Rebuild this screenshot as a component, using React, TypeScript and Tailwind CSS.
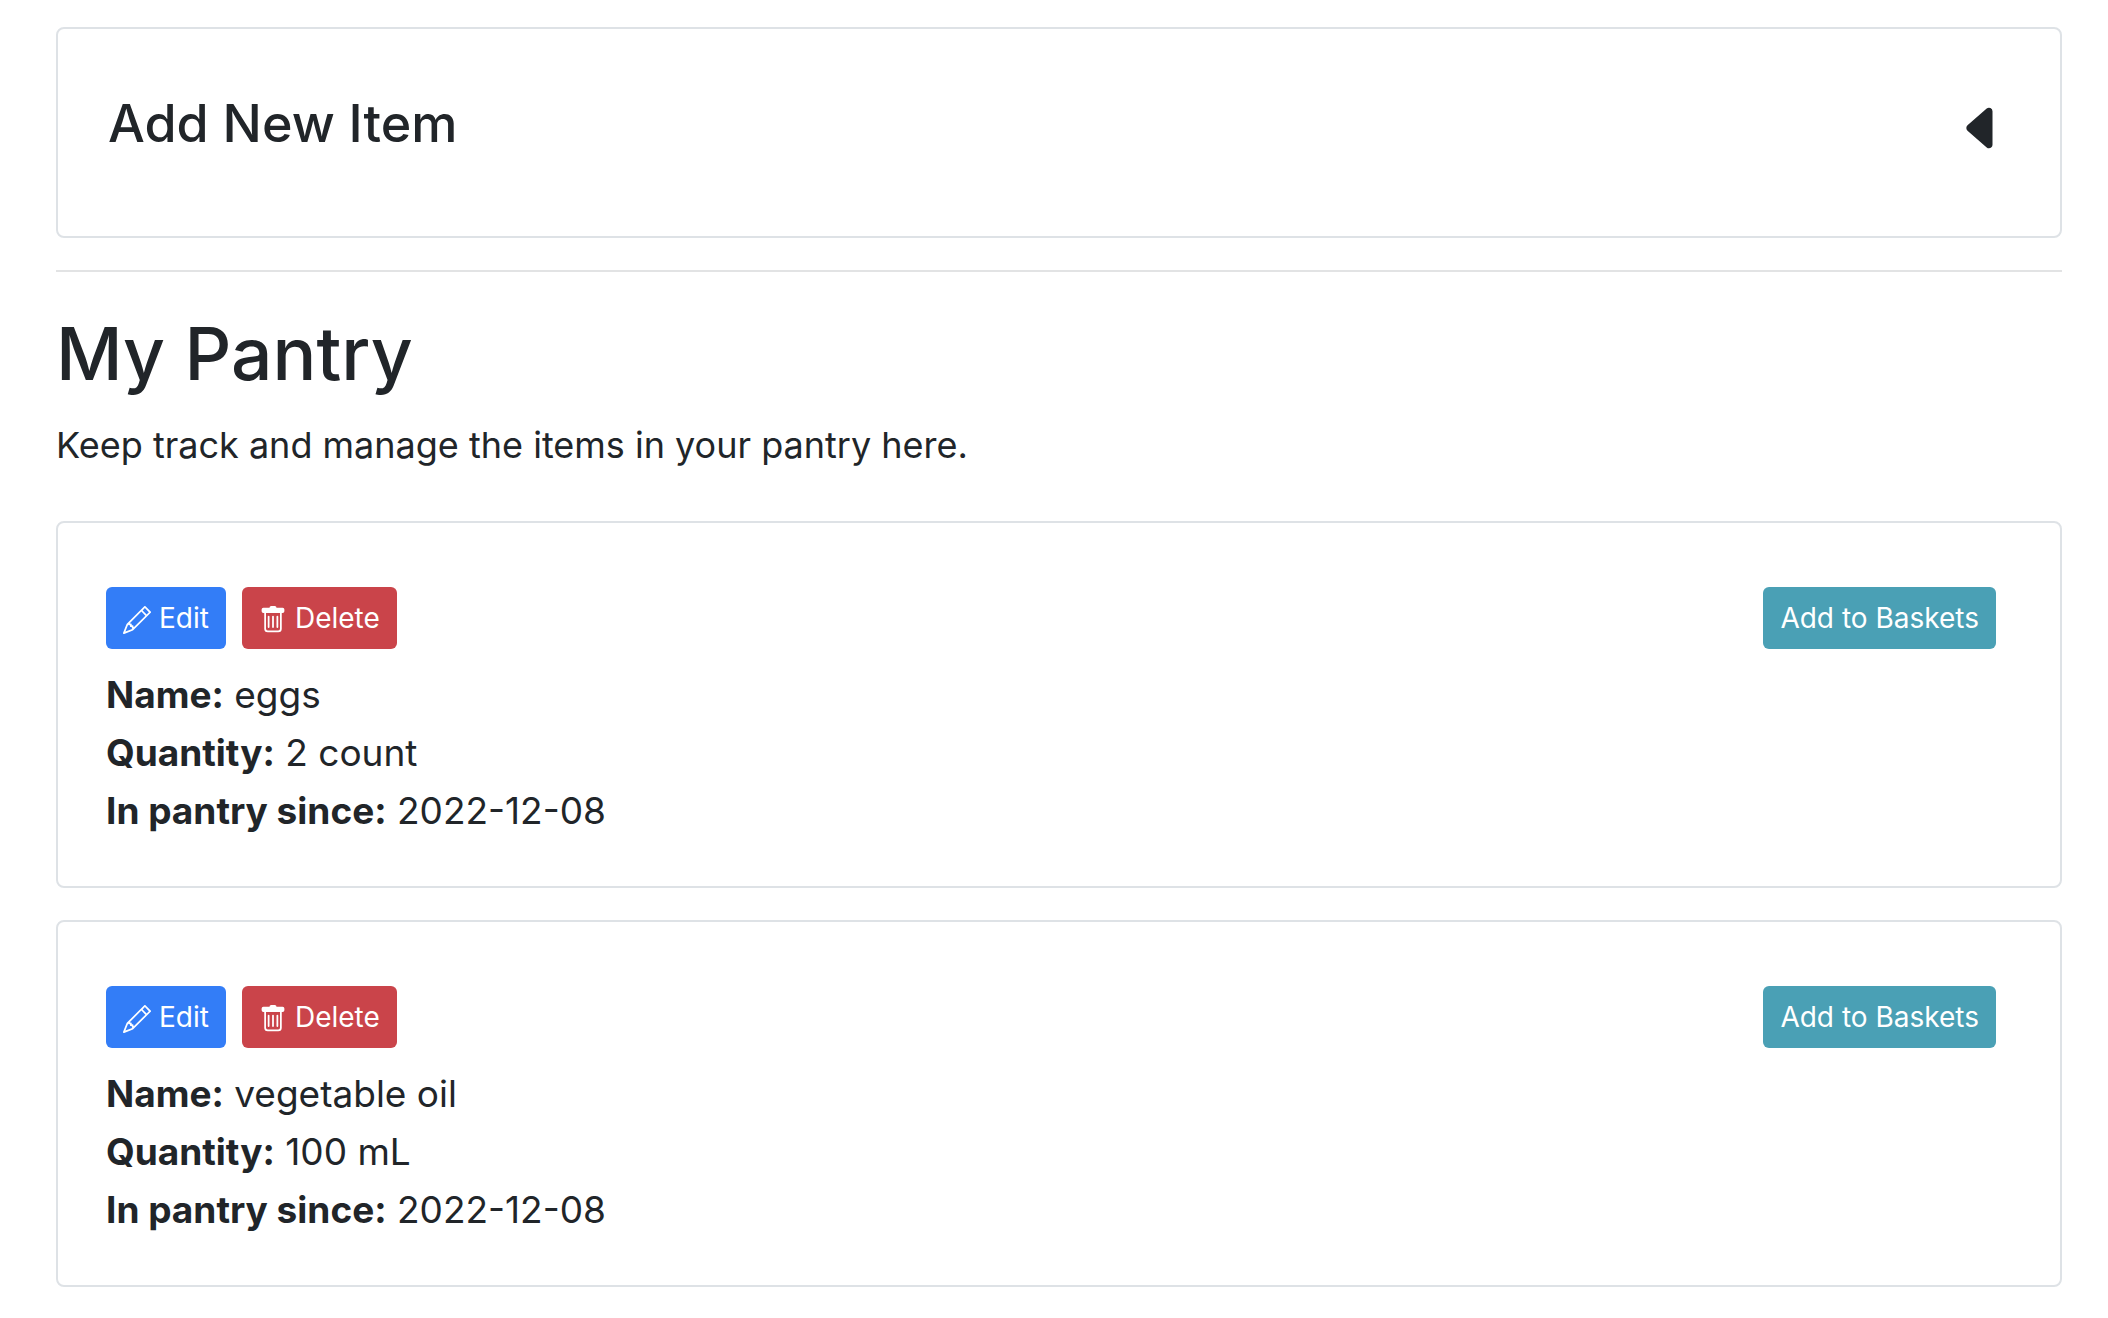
import { useState } from "react";
import { BsCaretLeftFill, BsPencil } from "react-icons/bs";

type PantryItem = { name: string; quantity: string; since: string };

const items: PantryItem[] = [
  { name: "eggs", quantity: "2 count", since: "2022-12-08" },
  { name: "vegetable oil", quantity: "100 mL", since: "2022-12-08" },
];

function TrashIcon({ className }: { className: string }) {
  return (
    <svg viewBox="0 0 16 16" fill="currentColor" aria-hidden="true" className={className}>
      <path d="M5.5 5.5A.5.5 0 0 1 6 6v6a.5.5 0 0 1-1 0V6a.5.5 0 0 1 .5-.5zm2.5 0a.5.5 0 0 1 .5.5v6a.5.5 0 0 1-1 0V6a.5.5 0 0 1 .5-.5zm3 .5a.5.5 0 0 0-1 0v6a.5.5 0 0 0 1 0V6z" />
      <path
        fillRule="evenodd"
        d="M14.5 3a1 1 0 0 1-1 1H13v9a2 2 0 0 1-2 2H5a2 2 0 0 1-2-2V4h-.5a1 1 0 0 1-1-1V2a1 1 0 0 1 1-1H6a1 1 0 0 1 1-1h2a1 1 0 0 1 1 1h3.5a1 1 0 0 1 1 1v1zM4.118 4 4 4.059V13a1 1 0 0 0 1 1h6a1 1 0 0 0 1-1V4.059L11.882 4H4.118z"
      />
    </svg>
  );
}

function ItemCard({ item }: { item: PantryItem }) {
  return (
    <article className="rounded-lg border-2 border-[#dee2e6] pt-16 pr-16 pb-[46px] pl-12">
      <div className="flex items-center justify-between">
        <div className="flex gap-4">
          <button type="button" className="flex items-center gap-2 rounded-md bg-[#337df7] px-[17px] py-2.5 text-[28px] leading-[42px] text-white">
            <BsPencil className="mt-1 size-7" />
            Edit
          </button>
          <button type="button" className="flex items-center gap-2 rounded-md bg-[#ca444a] px-[17px] py-2.5 text-[28px] leading-[42px] text-white">
            <TrashIcon className="mt-1 size-7" />
            Delete
          </button>
        </div>
        <button type="button" className="rounded-md bg-[#4aa0b5] px-[17px] py-2.5 text-[28px] leading-[42px] text-white">
          Add to Baskets
        </button>
      </div>
      <div className="mt-[17px] text-[37px] leading-[58px]">
        <p><strong className="font-bold">Name:</strong> {item.name}</p>
        <p><strong className="font-bold">Quantity:</strong> {item.quantity}</p>
        <p><strong className="font-bold">In pantry since:</strong> {item.since}</p>
      </div>
    </article>
  );
}

export default function App() {
  const [open, setOpen] = useState(false);
  return (
    <main className="bg-white pt-[27px] pr-[46px] pb-[31px] pl-14 font-['Inter',sans-serif] text-[#212529]">
      <section className="rounded-lg border-2 border-[#dee2e6] px-[50px] pt-16 pb-20">
        <div className="flex items-start justify-between">
          <h2 className="text-[52px] leading-[62px] font-medium">Add New Item</h2>
          <button type="button" aria-label="Toggle new item form" aria-expanded={open} onClick={() => setOpen(!open)} className="pt-[7px]">
            <BsCaretLeftFill className="size-14" />
          </button>
        </div>
      </section>
      <hr className="my-8 border-t-2 border-[#e2e3e4]" />
      <h1 className="text-[73px] leading-[100px] font-medium">My Pantry</h1>
      <p className="mt-3 text-[36px] leading-[58px]">Keep track and manage the items in your pantry here.</p>
      <div className="mt-[47px] flex flex-col gap-8">
        {items.map((item) => (
          <ItemCard key={item.name} item={item} />
        ))}
      </div>
    </main>
  );
}
